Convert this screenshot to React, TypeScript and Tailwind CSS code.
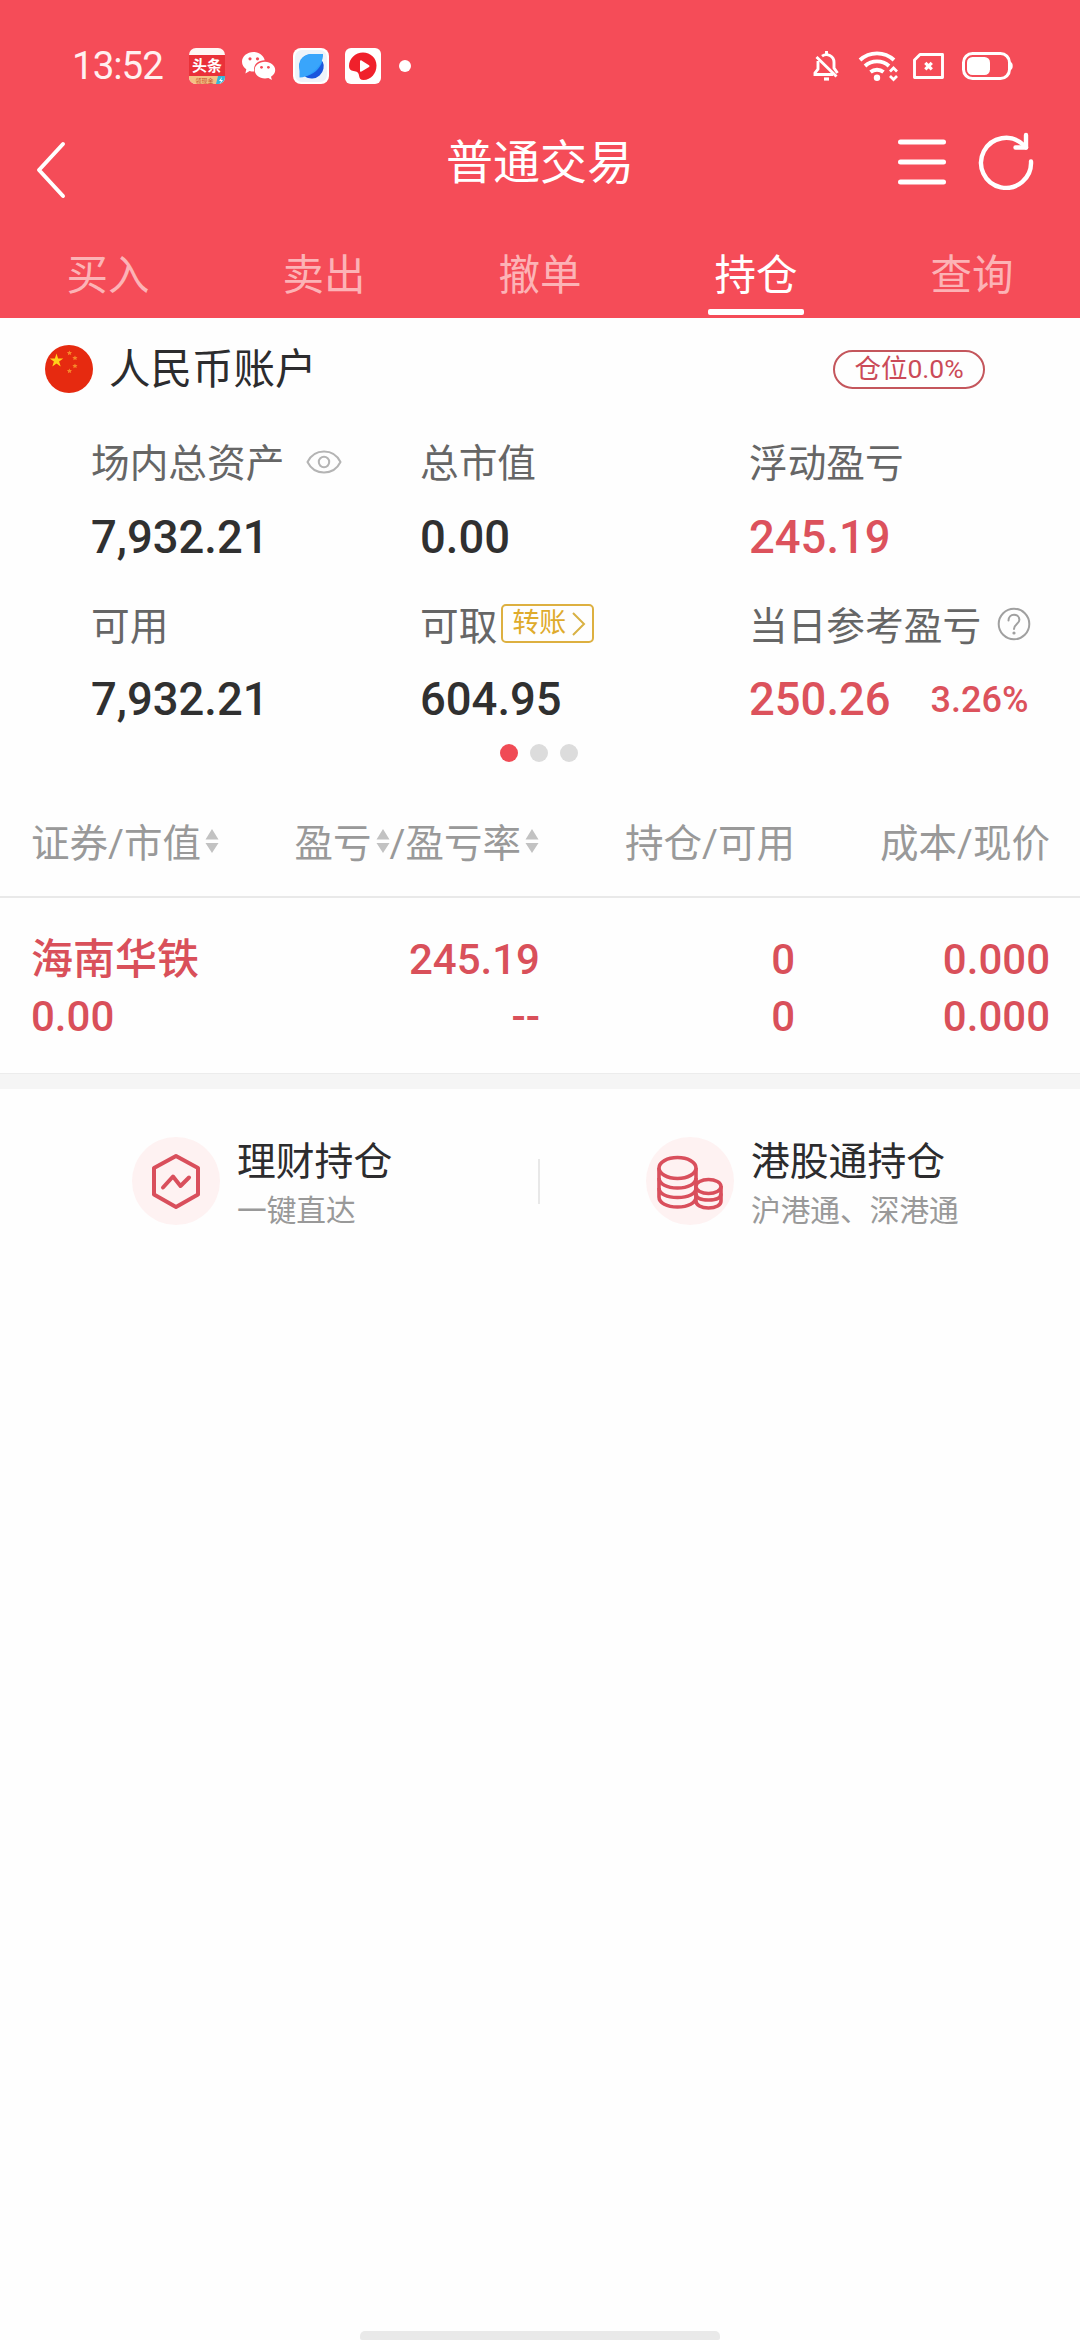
import React from "react";

const SANS = "font-[Roboto,'Noto_Sans_CJK_SC',sans-serif]";

function StatusBar() {
  return (
    <div className="flex h-[120px] items-center pt-3 pr-[67px] pl-[72px] text-white">
      <span className="w-[117px] text-[38.5px] leading-none font-normal tracking-[-1px] text-[#fff0f0]">13:52</span>
      <div className="flex items-center">
        <svg className="h-9 w-9" viewBox="0 0 36 36">
          <defs>
            <clipPath id="news">
              <rect width="36" height="36" rx="7" />
            </clipPath>
          </defs>
          <g clipPath="url(#news)">
            <rect width="36" height="36" fill="#fff6f4" />
            <rect y="7" width="36" height="21" fill="#ea3139" />
            <text x="18" y="23" textAnchor="middle" fontSize="15" fontWeight="700" fill="#fff">头条</text>
            <path d="M0 28h36v8H0z" fill="#f5c184" />
            <path d="M29 28h7v8h-9z" fill="#35b6dc" />
            <text x="15.500" y="34.500" textAnchor="middle" fontSize="6" fill="#c8502e">领现金</text>
            <path d="m33 29-3 4h2l-1 3 3-4h-2z" fill="#fff" />
          </g>
        </svg>
        <svg className="ml-[17px] h-7 w-[34px]" viewBox="0 0 34 28">
          <path d="M11.500 0C5.200 0 0 4.300 0 9.700c0 3.100 1.700 5.800 4.300 7.600L3.400 21.500l4.200-2.500c1.300.4 2.600.5 4 .5h.6C11 12.600 16 8.200 22.700 8.300 21.700 3.400 17 0 11.500 0z" fill="#fff" />
          <path d="M23 9.800c-6 0-10.300 3.700-10.300 8.300s4.500 8.400 10.300 8.400c1.200 0 2.300-.2 3.400-.5l3.500 2-.9-3.300c2.700-1.600 4.200-3.900 4.200-6.600 0-4.600-4.600-8.300-10.200-8.300z" fill="#fff" />
          <g fill="#f44c58">
            <circle cx="8" cy="6.800" r="1.600" />
            <circle cx="15.500" cy="6.800" r="1.600" />
            <circle cx="19.500" cy="15.300" r="1.400" />
            <circle cx="26.400" cy="15.300" r="1.400" />
          </g>
        </svg>
        <svg className="ml-[17px] h-9 w-9" viewBox="0 0 36 36">
          <rect width="36" height="36" rx="8" fill="#fff" />
          <rect x="2" y="2" width="32" height="32" rx="7" fill="#eef3fa" />
          <circle cx="18" cy="18" r="12" fill="#2c9dfb" />
          <path d="M29.500 13A12.200 12.200 0 0 1 12 28.600C20 27 27 21 29.500 13z" fill="#1a56dd" />
          <path d="M6.500 29.500V17A12 12 0 0 1 18 6h12c.6 6-4 13.500-11 18.500-4.500 3.300-8 5-12.500 5z" fill="#39a5fb" />
        </svg>
        <svg className="ml-4 h-9 w-9" viewBox="0 0 36 36">
          <rect width="36" height="36" rx="6" fill="#fff" />
          <path d="M18 4.500c7.500 0 13.500 5.500 13.500 13 0 8-5.500 14.500-13 14.500-3 0-4-1.500-4.500-4.500C13.500 24 12 23.500 8.500 23c-3-.5-4.500-2-4.500-5C4 10.500 10.500 4.500 18 4.500z" fill="#f0202b" />
          <path d="M15 13.200v9.600c0 .8.800 1.200 1.500.8l7.500-4.700c.7-.4.700-1.300 0-1.700l-7.500-4.700c-.7-.5-1.500-.1-1.500.7z" fill="#fff" />
        </svg>
        <span className="ml-[18px] h-3 w-3 rounded-full bg-white" />
      </div>
      <div className="ml-auto flex items-center">
        <svg className="h-[30px] w-[27px]" viewBox="0 0 27 30" fill="none" stroke="#fff" strokeWidth="2.900">
          <path d="M9 5.200a7.500 7.500 0 0 1 12 6V17l3.500 5M5 10v8l-3 4v1.500h18" />
          <path d="M13.500 0v4M3.500 6l20 19.500" />
          <path d="M11 28h5" strokeWidth="3.200" />
        </svg>
        <svg className="ml-[18px] h-8 w-10" viewBox="0 0 40 32" fill="none" stroke="#fff" strokeWidth="3.900">
          <path d="M2 10a25 25 0 0 1 34 0M7 16a18 18 0 0 1 24 0M12.500 22a10.500 10.500 0 0 1 13 0" />
          <circle cx="19" cy="27.800" r="3.200" fill="#fff" stroke="none" />
          <path d="m32 21.500 3.500-3.500 3.500 3.500M32 26l3.500 3.500L39 26" strokeWidth="2.700" />
        </svg>
        <svg className="ml-[15px] h-[26px] w-[31px]" viewBox="0 0 31 26" fill="none" stroke="#fff" strokeWidth="2.900">
          <path d="M7 1.500h22.500v23h-28V7z" strokeLinejoin="round" />
          <path d="m12.300 9.800 6.500 6.500m0-6.500-6.500 6.500" strokeWidth="3.200" />
        </svg>
        <svg className="ml-[18px] h-7 w-[51px]" viewBox="0 0 51 28" fill="none">
          <rect x="1.500" y="1.500" width="46" height="25" rx="9" stroke="#fff" strokeWidth="3" />
          <rect x="5" y="5" width="23" height="18" rx="5.500" fill="#fff" />
          <path d="M48 9.500c2 .8 2.700 2.400 2.700 4.500S50 17.700 48 18.500z" fill="#fff" />
        </svg>
      </div>
    </div>
  );
}

function TitleBar() {
  return (
    <div className="grid h-[84px] grid-cols-[1fr_auto_1fr] items-center text-white">
      <svg className="mt-4 ml-[35px] h-[60px] w-8" viewBox="0 0 32 60" fill="none" stroke="#fff" strokeWidth="4" strokeLinecap="round" strokeLinejoin="round">
        <path d="M28 4 4 30l24 26" />
      </svg>
      <h1 className="pt-0.5 text-[47px] leading-[60px] font-normal">普通交易</h1>
      <div className="flex items-center justify-end pr-[45px]">
        <svg className="h-[46px] w-12" viewBox="0 0 48 46" stroke="#fff" strokeWidth="5" strokeLinecap="round">
          <path d="M2.500 3h43M2.500 23h43M2.500 43h43" />
        </svg>
        <svg className="mb-0.5 ml-[31px] h-[58px] w-[58px]" viewBox="0 0 58 58" fill="none" stroke="#fff" strokeWidth="4.400" strokeLinecap="round" strokeLinejoin="round">
          <path d="M54 29.500A25 25 0 1 1 46 12.500L49 15.500" />
          <path d="M49 3v12.500H38.500" />
        </svg>
      </div>
    </div>
  );
}

const tabs = ["买入", "卖出", "撤单", "持仓", "查询"];

function Tabs() {
  return (
    <nav className="grid h-[114px] grid-cols-5 text-center text-[41.5px]">
      {tabs.map((t) => {
        const active = t === "持仓";
        return (
          <div key={t} className={active ? "flex flex-col items-center pt-[42px] text-white" : "flex flex-col items-center pt-[42px] text-[#fcb3b6]"}>
            <span className="h-[63px] leading-[60px]">{t}</span>
            {active && <span className="h-1.5 w-24 rounded-[2px] bg-white" />}
          </div>
        );
      })}
    </nav>
  );
}

function AccountRow() {
  return (
    <div className="flex h-[102px] items-center pr-[95px] pl-[45px]">
      <svg className="h-12 w-12" viewBox="0 0 48 48">
        <circle cx="24" cy="24" r="24" fill="#e62a10" />
        <path d="m11.500 8.500 1.600 5h5.200l-4.200 3.100 1.600 5-4.200-3.100-4.200 3.100 1.600-5-4.200-3.100h5.200z" fill="#ffd21a" />
        <g fill="#f6882a">
          <path id="s" d="m24.500 5.500.7 1.500 1.800.1-1.200 1.200.4 1.800-1.700-.8-1.600.9.300-1.800-1.300-1.300 1.800-.2z" />
          <use href="#s" x="5.500" y="5" />
          <use href="#s" x="5.500" y="13" />
          <use href="#s" y="18" />
        </g>
      </svg>
      <span className="ml-4 pt-0.5 text-[41.5px] leading-[60px] text-[#2c2c2e]">人民币账户</span>
      <span className="ml-auto flex h-[39px] w-[152px] items-center justify-center rounded-full border-2 border-[#c4565c] pt-px text-[26.5px] leading-none text-[#cb4a58]">
        仓位0.0%
      </span>
    </div>
  );
}

function EyeIcon() {
  return (
    <svg className="mb-1 ml-[22px] h-6 w-9" viewBox="0 0 36 24" fill="none" stroke="#b4b4b4" strokeWidth="2">
      <path d="M1.500 12C5 5 11 1.500 18 1.500S31 5 34.500 12C31 19 25 22.500 18 22.500S5 19 1.500 12z" strokeLinejoin="round" />
      <circle cx="18" cy="12" r="5.200" />
    </svg>
  );
}

function HelpIcon() {
  return (
    <svg className="mb-1.5 ml-4 h-[34px] w-[34px]" viewBox="0 0 34 34" fill="none" stroke="#a0a0a0" strokeWidth="2">
      <circle cx="17" cy="17" r="15.300" />
      <path d="M11.500 13.500c0-3.500 2.300-5.700 5.500-5.700s5.400 2 5.400 4.900c0 4.300-5.400 4.300-5.400 9.300" strokeLinecap="round" />
      <circle cx="17" cy="26" r="1.600" fill="#a0a0a0" stroke="none" />
    </svg>
  );
}

function TransferButton() {
  return (
    <button className="mb-1.5 ml-1 flex h-[39px] w-[93px] items-center rounded-[5px] border-2 border-[#ddb040] pl-[9px] text-[27px] leading-none text-[#dfab2c]">
      转账
      <svg className="ml-1 h-[26px] w-4" viewBox="0 0 16 26" fill="none" stroke="#d8b144" strokeWidth="2">
        <path d="m3 2 11 11L3 24" />
      </svg>
    </button>
  );
}

function Label({ text, children }: { text: string; children?: React.ReactNode }) {
  return (
    <div className="flex items-center text-[38.7px] whitespace-nowrap text-[#666]">
      <span>{text}</span>
      {children}
    </div>
  );
}

const COLS = "grid grid-cols-[329px_329px_1fr] items-center pl-[91px]";

function Summary() {
  return (
    <section>
      <div className={`${COLS} h-[88px]`}>
        <Label text="场内总资产"><EyeIcon /></Label>
        <Label text="总市值" />
        <Label text="浮动盈亏" />
      </div>
      <div className={`${COLS} h-[60px] text-[45.4px] leading-[60px] font-medium text-[#303030]`}>
        <span>7,932.21</span>
        <span>0.00</span>
        <span className="text-[#dc525c]">245.19</span>
      </div>
      <div className={`${COLS} h-[102px] pt-4`}>
        <Label text="可用" />
        <Label text="可取"><TransferButton /></Label>
        <Label text="当日参考盈亏"><HelpIcon /></Label>
      </div>
      <div className={`${COLS} h-[60px] text-[45.4px] leading-[60px] font-medium text-[#303030]`}>
        <span>7,932.21</span>
        <span>604.95</span>
        <span className="flex items-center text-[#dc525c]">
          250.26
          <span className="ml-10 text-[36px]">3.26%</span>
        </span>
      </div>
      <div className="flex h-[46px] items-center justify-center gap-3 pr-[3px]">
        <span className="h-[18px] w-[18px] rounded-full bg-[#f04b55]" />
        <span className="h-[18px] w-[18px] rounded-full bg-[#dcdcdc]" />
        <span className="h-[18px] w-[18px] rounded-full bg-[#dcdcdc]" />
      </div>
    </section>
  );
}

function Sort({ tight = false }: { tight?: boolean }) {
  return (
    <svg className={tight ? "mr-0 mb-1.5 ml-1 h-6 w-3.5" : "mx-1 mb-1.5 h-6 w-3.5"} viewBox="0 0 14 24" fill="#c2c2c2">
      <path d="M7 0l6.500 10.500H.5zM7 24 .5 14h13z" />
    </svg>
  );
}

const TABLE = "grid grid-cols-[254px_255px_255px_255px] pr-[30px] pl-[31px]";

function Holdings() {
  return (
    <section>
      <div className={`${TABLE} h-[122px] items-center border-b-2 border-[#e9e9e9] pt-[15px] text-[38.5px] whitespace-nowrap text-[#999]`}>
        <div className="flex items-center">证券/市值<Sort /></div>
        <div className="-mr-[3px] flex items-center justify-end">盈亏<Sort tight />/盈亏率<Sort /></div>
        <div className="text-right">持仓/可用</div>
        <div className="text-right">成本/现价</div>
      </div>
      <div className={`${TABLE} h-[175px] pt-[33px] text-right text-[42px] leading-[57px] font-medium text-[#d9505a]`}>
        <div className="flex flex-col text-left"><span>海南华铁</span><span>0.00</span></div>
        <div className="flex flex-col"><span>245.19</span><span>--</span></div>
        <div className="flex flex-col"><span>0</span><span>0</span></div>
        <div className="flex flex-col"><span>0.000</span><span>0.000</span></div>
      </div>
      <div className="h-4 border-t border-[#ececec] bg-[#f5f5f5]" />
    </section>
  );
}

function Shortcuts() {
  return (
    <section className="flex h-[184px] items-center">
      <div className="flex w-[538px] items-center pl-[132px]">
        <svg className="h-[88px] w-[88px]" viewBox="0 0 88 88" fill="none" stroke="#d94f5c" strokeLinecap="round" strokeLinejoin="round">
          <circle cx="44" cy="44" r="44" fill="#fef2f2" stroke="none" />
          <path d="M44 19 66 31v26.500L44 70 22 57.500V31z" strokeWidth="4" />
          <path d="m31 50.500 10-11 7.500 9.500L57 40.500" strokeWidth="4" />
        </svg>
        <ShortcutText title="理财持仓" sub="一键直达" />
      </div>
      <div className="h-[45px] w-0.5 bg-[#e8e8e8]" />
      <div className="flex items-center pl-[106px]">
        <svg className="h-[88px] w-[88px]" viewBox="0 0 88 88" fill="#fef2f2" stroke="#d94f5c" strokeWidth="3.600">
          <circle cx="44" cy="44" r="44" stroke="none" />
          <path d="M13 31v29c0 6 8 10 18.500 10S50 66 50 60V31" />
          <path d="M13 51c0 6 8 9.500 18.500 9.500S50 57 50 51M13 41c0 6 8 10 18.500 10S50 47 50 41" fill="none" />
          <ellipse cx="31.500" cy="31" rx="18.500" ry="10.500" />
          <path d="M50 49v15c0 4 5 7 12.500 7S75 68 75 64V49" />
          <path d="M50 56.500c0 4.500 5 6.500 12.500 6.500S75 61 75 56.500" fill="none" />
          <ellipse cx="62.500" cy="49.500" rx="12.500" ry="7" />
        </svg>
        <ShortcutText title="港股通持仓" sub="沪港通、深港通" />
      </div>
    </section>
  );
}

function ShortcutText({ title, sub }: { title: string; sub: string }) {
  return (
    <div className="ml-[17px] flex flex-col pt-1.5 whitespace-nowrap">
      <span className="text-[38.8px] leading-[54px] text-[#2c2c2e]">{title}</span>
      <span className="text-[29.7px] leading-[44px] text-[#999]">{sub}</span>
    </div>
  );
}

export default function App() {
  return (
    <div className={`${SANS} flex h-[2340px] w-[1080px] flex-col overflow-hidden bg-[#fefefe]`} lang="zh-CN">
      <header className="h-[318px] bg-[#f54c58]">
        <StatusBar />
        <TitleBar />
        <Tabs />
      </header>
      <AccountRow />
      <Summary />
      <Holdings />
      <Shortcuts />
      <div className="mt-auto flex justify-center">
        <div className="h-[9px] w-[360px] rounded-t-[5px] rounded-b-[2px] bg-[#e9e9e9]" />
      </div>
    </div>
  );
}
